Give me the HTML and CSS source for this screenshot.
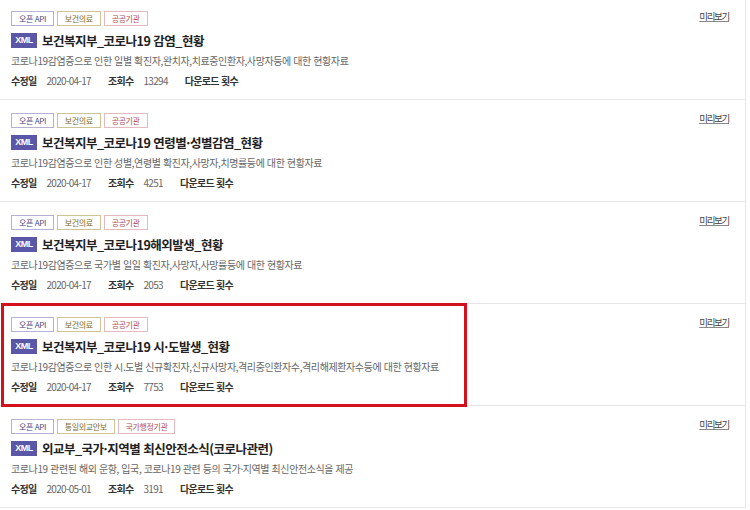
FILE: index.html
```html
<!DOCTYPE html>
<html lang="ko">
<head>
  <meta charset="UTF-8" />
  <title>공공데이터 목록</title>
  <link rel="stylesheet" href="styles.css">
</head>
<body>

<ul class="list">
  <li class="item">
    <div class="info">
      <div class="tags">
        <span class="tag tag-api">오픈 API</span>
        <span class="tag tag-cat">보건의료</span>
        <span class="tag tag-org">공공기관</span>
      </div>
      <h3 class="title"><span class="badge">XML</span>보건복지부_코로나19 감염_현황</h3>
      <p class="desc">코로나19감염증으로 인한 일별 확진자,완치자,치료중인환자,사망자등에 대한 현황자료</p>
      <div class="meta">
        <b>수정일</b><span>2020-04-17</span>
        <b>조회수</b><span>13294</span>
        <b>다운로드 횟수</b>
      </div>
    </div>
    <a class="preview" href="#">미리보기</a>
  </li>
  <li class="item">
    <div class="info">
      <div class="tags">
        <span class="tag tag-api">오픈 API</span>
        <span class="tag tag-cat">보건의료</span>
        <span class="tag tag-org">공공기관</span>
      </div>
      <h3 class="title"><span class="badge">XML</span>보건복지부_코로나19 연령별·성별감염_현황</h3>
      <p class="desc">코로나19감염증으로 인한 성별,연령별 확진자,사망자,치명률등에 대한 현황자료</p>
      <div class="meta">
        <b>수정일</b><span>2020-04-17</span>
        <b>조회수</b><span>4251</span>
        <b>다운로드 횟수</b>
      </div>
    </div>
    <a class="preview" href="#">미리보기</a>
  </li>
  <li class="item">
    <div class="info">
      <div class="tags">
        <span class="tag tag-api">오픈 API</span>
        <span class="tag tag-cat">보건의료</span>
        <span class="tag tag-org">공공기관</span>
      </div>
      <h3 class="title"><span class="badge">XML</span>보건복지부_코로나19해외발생_현황</h3>
      <p class="desc">코로나19감염증으로 국가별 일일 확진자,사망자,사망률등에 대한 현황자료</p>
      <div class="meta">
        <b>수정일</b><span>2020-04-17</span>
        <b>조회수</b><span>2053</span>
        <b>다운로드 횟수</b>
      </div>
    </div>
    <a class="preview" href="#">미리보기</a>
  </li>
  <li class="item">
    <div class="info">
      <div class="tags">
        <span class="tag tag-api">오픈 API</span>
        <span class="tag tag-cat">보건의료</span>
        <span class="tag tag-org">공공기관</span>
      </div>
      <h3 class="title"><span class="badge">XML</span>보건복지부_코로나19 시·도발생_현황</h3>
      <p class="desc">코로나19감염증으로 인한 시.도별 신규확진자,신규사망자,격리중인환자수,격리해제환자수등에 대한 현황자료</p>
      <div class="meta">
        <b>수정일</b><span>2020-04-17</span>
        <b>조회수</b><span>7753</span>
        <b>다운로드 횟수</b>
      </div>
    </div>
    <a class="preview" href="#">미리보기</a>
    <div class="highlight"></div>
  </li>
  <li class="item">
    <div class="info">
      <div class="tags">
        <span class="tag tag-api">오픈 API</span>
        <span class="tag tag-cat">통일외교안보</span>
        <span class="tag tag-org">국가행정기관</span>
      </div>
      <h3 class="title"><span class="badge">XML</span>외교부_국가·지역별 최신안전소식(코로나관련)</h3>
      <p class="desc">코로나19 관련된 해외 운항, 입국, 코로나19 관련 등의 국가·지역별 최신안전소식을 제공</p>
      <div class="meta">
        <b>수정일</b><span>2020-05-01</span>
        <b>조회수</b><span>3191</span>
        <b>다운로드 횟수</b>
      </div>
    </div>
    <a class="preview" href="#">미리보기</a>
  </li>
</ul>

</body>
</html>
```

FILE: styles.css
```css
body { margin: 0; background: #fff; font-family: "Noto Sans CJK KR", "Noto Sans", sans-serif; color: #333; overflow: hidden; }
.list { list-style: none; margin: -2px 0 0; padding: 0; width: 745px; border-right: 1px solid #e8e8e8; }
.item { position: relative; display: flex; justify-content: space-between; height: 102px; box-sizing: border-box; padding: 13px 16px 0 11px; border-bottom: 1px solid #e6e6e6; }
.tags { display: flex; gap: 3px; }
.tag { height: 15px; box-sizing: border-box; padding: 0 7px; border: 1px solid; font-size: 8px; line-height: 13px; letter-spacing: -0.4px; }
.tag-api { border-color: #b4b1d2; color: #4a4680; }
.tag-cat { border-color: #cfc594; color: #7d6c2c; }
.tag-org { border-color: #e5b9c0; color: #b0505e; }
.title { display: flex; align-items: center; margin: 6px 0 0; font-size: 12.5px; line-height: 17px; font-weight: bold; color: #222; letter-spacing: -0.5px; }
.badge { width: 26px; height: 15px; margin-right: 5px; background: #5a56a8; color: #fff; font-size: 9px; line-height: 15px; text-align: center; font-family: "Liberation Sans", sans-serif; letter-spacing: -0.5px; }
.desc { margin: 4px 0 0; font-size: 10px; line-height: 16px; color: #666; letter-spacing: -0.4px; }
.meta { margin-top: 4px; font-size: 10px; line-height: 16px; letter-spacing: -0.7px; }
.meta b { color: #333; margin-right: 10px; }
.meta span { color: #666; margin-right: 15px; }
.preview { margin-top: -2px; font-size: 9.5px; line-height: 15px; color: #444; letter-spacing: -1.3px; text-decoration: underline; text-decoration-color: #888; }
.highlight { position: absolute; left: 1px; top: -1px; width: 466px; height: 104px; box-sizing: border-box; border: 3px solid #d3111d; pointer-events: none; }
```
